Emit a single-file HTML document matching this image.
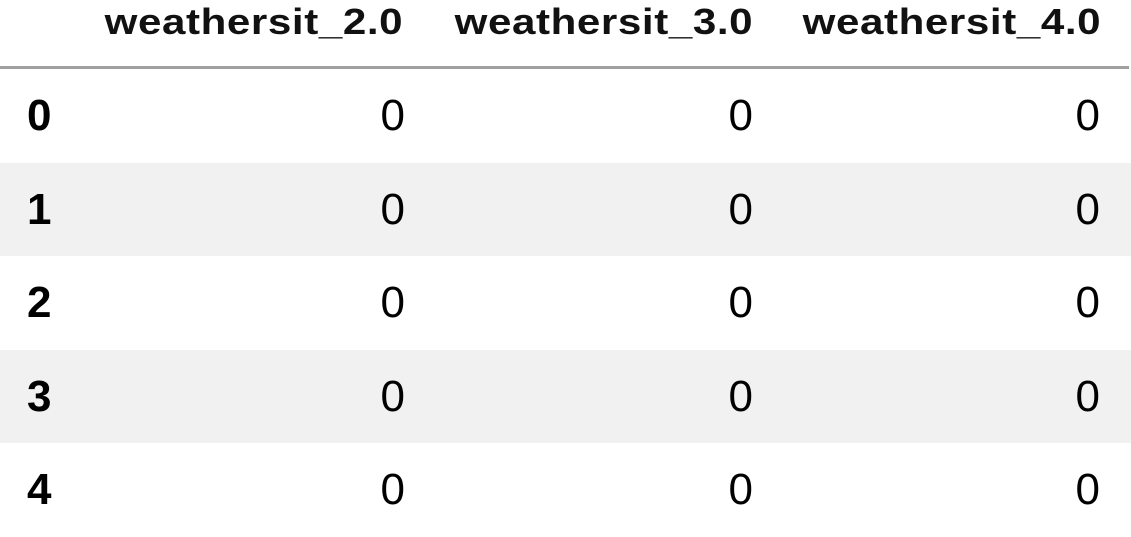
<!DOCTYPE html>
<html><head><style>
html,body{margin:0;padding:0;background:#fff;}
body{width:1131px;height:507px;position:relative;overflow:hidden;font-family:"Liberation Sans",Arial,sans-serif;color:#000;}
.h{position:absolute;top:4px;font-size:36px;line-height:1;font-weight:bold;letter-spacing:0.5px;white-space:nowrap;color:#111;transform:scaleX(1.17);transform-origin:right center;}
.line{position:absolute;left:0;top:66px;width:1129px;height:3px;background:#a0a0a0;}
.row{position:absolute;left:0;width:1131px;}
.row.s{background:#f1f1f1;}
.c{position:absolute;top:0;height:100%;display:flex;align-items:center;font-size:44px;line-height:1;}
.i{left:27px;font-weight:bold;}
</style></head><body>
<div class="h" style="right:30px">weathersit_4.0</div>
<div class="h" style="right:378px">weathersit_3.0</div>
<div class="h" style="right:728px">weathersit_2.0</div>
<div class="line"></div>

<div class="row" style="top:69px;height:94px"><div class="c i">0</div><div class="c" style="right:726px">0</div><div class="c" style="right:378px">0</div><div class="c" style="right:31px">0</div></div>
<div class="row s" style="top:163px;height:93px"><div class="c i">1</div><div class="c" style="right:726px">0</div><div class="c" style="right:378px">0</div><div class="c" style="right:31px">0</div></div>
<div class="row" style="top:256px;height:94px"><div class="c i">2</div><div class="c" style="right:726px">0</div><div class="c" style="right:378px">0</div><div class="c" style="right:31px">0</div></div>
<div class="row s" style="top:350px;height:93px"><div class="c i">3</div><div class="c" style="right:726px">0</div><div class="c" style="right:378px">0</div><div class="c" style="right:31px">0</div></div>
<div class="row" style="top:443px;height:94px"><div class="c i">4</div><div class="c" style="right:726px">0</div><div class="c" style="right:378px">0</div><div class="c" style="right:31px">0</div></div>
</body></html>
